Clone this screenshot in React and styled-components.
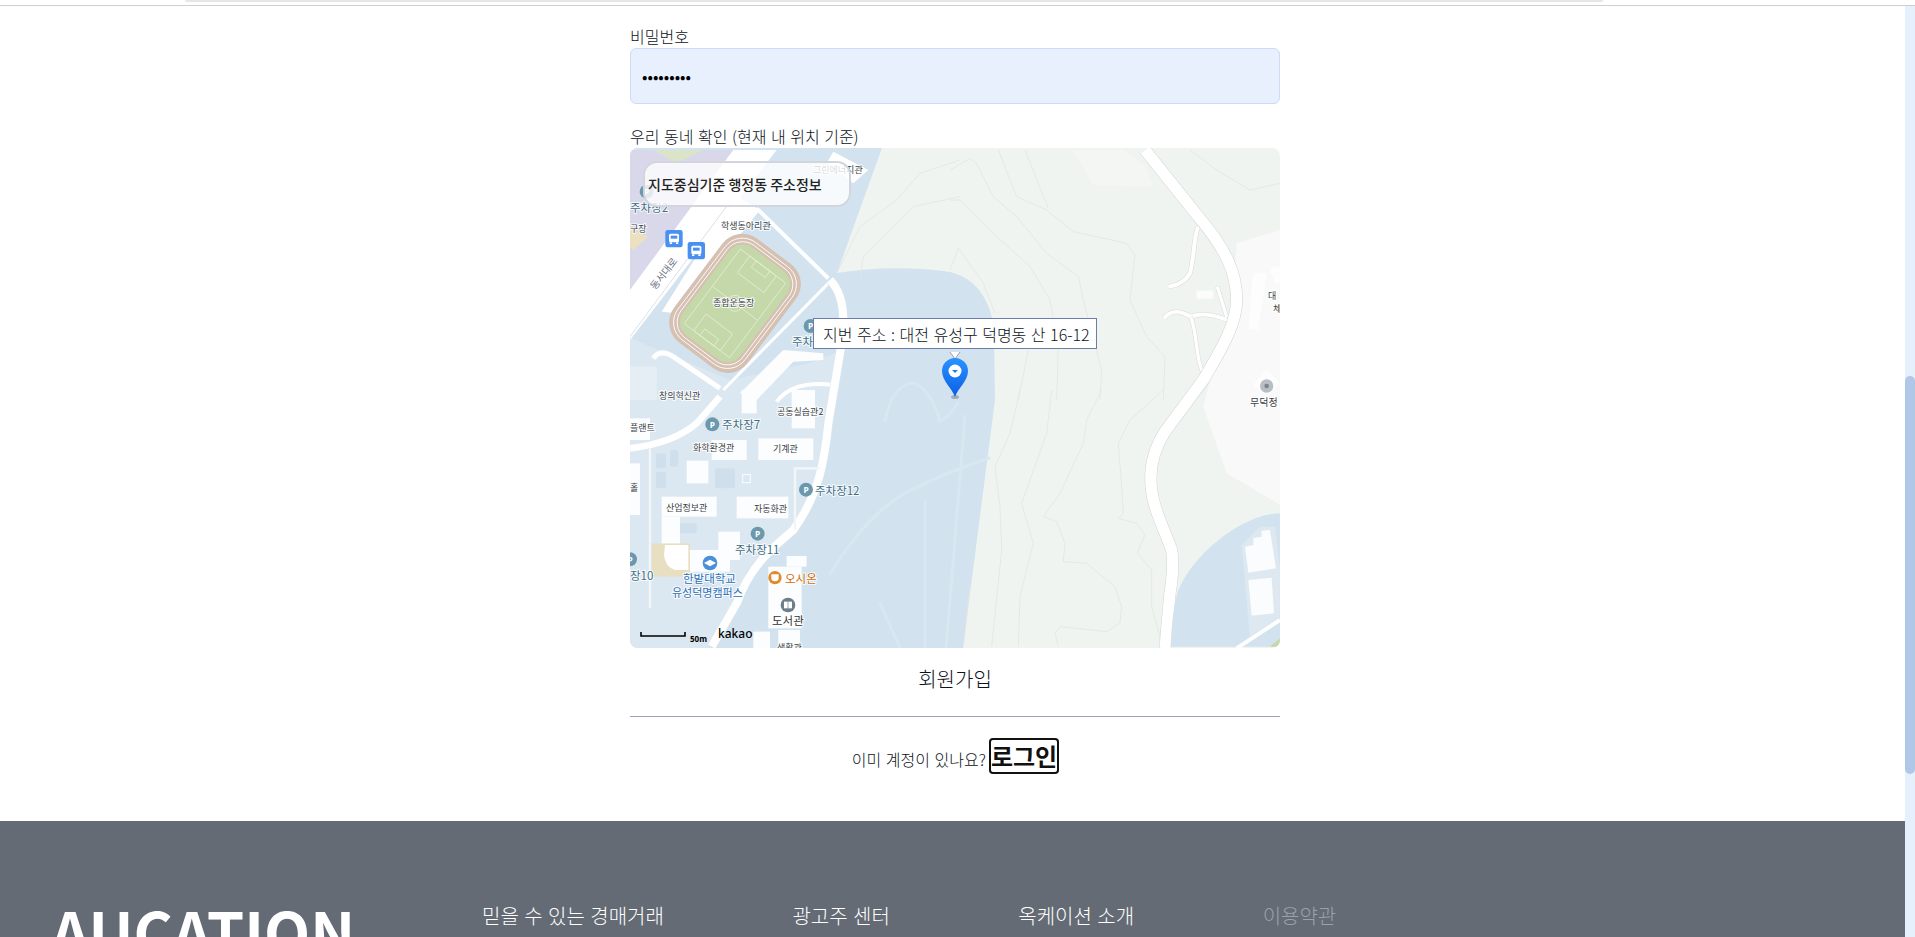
import React from "react";
import styled, { createGlobalStyle } from "styled-components";

const GlobalStyle = createGlobalStyle`
  html, body {
    margin: 0;
    padding: 0;
    background: #fff;
    overflow: hidden;
  }
  * {
    box-sizing: border-box;
  }
  body {
    font-family: "Noto Sans CJK KR", "Noto Sans", sans-serif;
    font-weight: 300;
    word-spacing: 1px;
    color: #0b1220;
  }
`;

const Screen = styled.div`
  display: flex;
  flex-direction: column;
  width: 1915px;
  height: 937px;
  overflow: hidden;
`;

const TopBar = styled.header`
  flex: none;
  height: 6px;
  border-bottom: 1px solid #cfcfcf;
`;

const TopStrip = styled.div`
  width: 1418px;
  height: 2px;
  margin-left: 185px;
  background: #e6e6e6;
  border-radius: 0 0 4px 4px;
`;

const Body = styled.div`
  flex: 1;
  min-height: 0;
  display: flex;
`;

const Main = styled.main`
  flex: 1;
  min-width: 0;
`;

const Track = styled.div`
  flex: none;
  width: 10px;
  padding-top: 370px;
  background: #e6effc;
`;

const Thumb = styled.div`
  height: 398px;
  border-radius: 5px;
  background: #b1c7e8;
`;

const Form = styled.form`
  width: 650px;
  margin-left: 630px;
  padding-top: 18px;
`;

const Label = styled.label`
  display: block;
  font-size: 16px;
  line-height: 24px;
`;

const PasswordInput = styled.input`
  display: block;
  width: 100%;
  height: 56px;
  margin-bottom: 20px;
  padding: 0 11px;
  border: 1px solid #cbdcfb;
  border-radius: 6px;
  background: #e8f0fe;
  color: #000;
  font-size: 16px;
  font-family: inherit;
  outline: none;
`;

const MapFrame = styled.div`
  position: relative;
  height: 500px;
  border-radius: 8px;
  overflow: hidden;
`;

const MapSvg = styled.svg`
  display: block;
  width: 650px;
  height: 500px;
  word-spacing: 0;
`;

const MapLabel = styled.text`
  font-family: "Noto Sans CJK KR", sans-serif;
  font-weight: 400;
  font-size: ${(p) => p.$size || 9}px;
  fill: ${(p) => p.$fill || "#3a3f47"};
  stroke: #fff;
  stroke-width: 2px;
  stroke-opacity: 0.85;
  paint-order: stroke;
  dominant-baseline: central;
`;

const IconLetter = styled.text`
  font-family: "Noto Sans", sans-serif;
  font-size: 25px;
  font-weight: 700;
  fill: #fff;
  text-anchor: middle;
  dominant-baseline: central;
`;

const ScaleText = styled.text`
  font-family: "Noto Sans", sans-serif;
  font-size: ${(p) => p.$size}px;
  font-weight: ${(p) => p.$weight};
  fill: #000;
  dominant-baseline: central;
`;

const AreaBox = styled.div`
  position: absolute;
  top: 13px;
  left: 13px;
  width: 208px;
  height: 46px;
  padding-left: 3px;
  display: flex;
  align-items: center;
  border: 2px solid #d2d6dc;
  border-radius: 14px;
  background: rgba(255, 255, 255, 0.8);
  color: #222;
  font-size: 14px;
  font-weight: 500;
  word-spacing: 0;
  white-space: nowrap;
`;

const AddressTip = styled.div`
  position: absolute;
  top: 170px;
  left: 183px;
  width: 284px;
  height: 31px;
  padding-left: 9px;
  display: flex;
  align-items: center;
  border: 1px solid #6b7da8;
  background: #fff;
  color: #0b1220;
  font-size: 16px;
  white-space: nowrap;
`;

const SubmitButton = styled.button`
  display: block;
  width: 100%;
  height: 50px;
  margin-top: 5px;
  padding: 0;
  border: none;
  background: none;
  color: #0b1220;
  font-family: inherit;
  font-weight: inherit;
  font-size: 20px;
`;

const Divider = styled.hr`
  height: 1px;
  margin: 13px 0 0;
  border: none;
  background: #9ea3b6;
`;

const LoginRow = styled.p`
  display: flex;
  justify-content: center;
  align-items: center;
  gap: 3px;
  height: 36px;
  margin: 21px 0 0;
  padding-left: 1px;
  font-size: 16px;
`;

const HintText = styled.span`
  padding-top: 6px;
`;

const LoginLink = styled.a`
  display: block;
  height: 36px;
  border: 2px solid #111;
  border-radius: 4px;
  color: #111;
  font-size: 24px;
  font-weight: 700;
  line-height: 31px;
`;

const Footer = styled.footer`
  display: flex;
  align-items: flex-start;
  height: 300px;
  margin-top: 47px;
  padding: 77px 0 0 51px;
  background: #646b75;
`;

const Logo = styled.div`
  width: 431px;
  margin-top: 2px;
  color: #fff;
  font-size: 60px;
  font-weight: 700;
  line-height: 60px;
`;

const FooterNav = styled.nav`
  display: flex;
  gap: 128.5px;
`;

const FooterLink = styled.a`
  color: ${(p) => (p.$muted ? "#9aa1aa" : "#fff")};
  font-size: 20px;
  line-height: 36px;
`;

const Road = ({ d, w, casing = "#cfd3d4" }) => (
  <>
    <path d={d} fill="none" stroke={casing} strokeWidth={w + 3} strokeLinejoin="round" />
    <path d={d} fill="none" stroke="#fff" strokeWidth={w} strokeLinejoin="round" />
  </>
);

const Contour = ({ points }) => (
  <polyline points={points} fill="none" stroke="#e2e6e2" strokeWidth="2.4" strokeLinejoin="round" />
);

const Parking = ({ x, y }) => (
  <g>
    <circle cx={x} cy={y} r="21" fill="#6c98ae" />
    <IconLetter x={x} y={y}>P</IconLetter>
  </g>
);

const Bus = ({ x, y }) => (
  <g>
    <rect x={x - 26} y={y - 26} width="52" height="52" rx="7" fill="#4a90f0" />
    <rect x={x - 15} y={y - 15} width="30" height="26" rx="5" fill="#fff" />
    <rect x={x - 10} y={y - 9} width="20" height="9" fill="#4a90f0" />
    <rect x={x - 13} y={y + 11} width="7" height="5" fill="#fff" />
    <rect x={x + 6} y={y + 11} width="7" height="5" fill="#fff" />
  </g>
);

const contoursTopLeft = [
  "650,400 720,260 830,180 900,100 1020,60",
  "720,420 730,350 880,200 1020,170",
];

const contoursTopRight = [
  "0,90 60,55 80,70 130,170 200,230 290,340 385,410 400,480 455,690 450,780",
  "0,180 30,180 130,280 240,380 300,480 325,620 320,780",
  "145,30 200,170 290,210 370,275 530,310 555,345 540,480 590,590 645,650 640,780",
  "225,30 295,205",
  "0,390 25,325 100,430 135,520",
  "235,630 205,780",
  "720,30 800,90 900,150 990,130",
];

const contoursBottomRight = [
  "210,0 180,130 135,230 150,350 155,480 125,770",
  "305,0 290,130 215,340 250,460 210,620 205,770",
  "455,0 410,90 400,160 330,310 280,380 320,395 345,460 340,515 410,520 495,590 515,650 510,700 470,725 330,710 315,730 325,770",
  "640,0 540,90 505,160 515,290 520,370 505,385 560,400 585,435 562,490 605,540 605,650 630,740 628,770",
  "60,590 40,770",
];

const campusBuildings = [
  [415, 145, 165, 65],
  [275, 150, 105, 60],
  [515, 0, 70, 115],
  [365, 0, 45, 70],
  [200, 212, 65, 68],
  [350, 320, 155, 65],
  [125, 320, 165, 60],
  [125, 380, 55, 80],
  [295, 425, 65, 85],
  [210, 480, 120, 65],
  [445, 530, 100, 185],
  [500, 498, 60, 32],
  [475, 720, 65, 60],
  [400, 725, 50, 50],
  [30, 85, 60, 65],
  [30, 220, 30, 130],
  [30, 345, 30, 30],
];

const campusLawns = [
  [108, 190, 30, 45],
  [150, 180, 25, 50],
  [108, 245, 30, 50],
  [285, 235, 60, 60],
  [150, 400, 80, 30],
  [215, 570, 70, 40],
];

const mapLabels = [
  { text: "그린에너지관", x: 183, y: 21, size: 9 },
  { text: "주차장2", x: 0, y: 59, size: 11.5, fill: "#3d6e84" },
  { text: "학생동아리관", x: 91, y: 77 },
  { text: "구장", x: 0, y: 80 },
  { text: "종합운동장", x: 83, y: 154 },
  { text: "주차장1", x: 162, y: 193, size: 11.5, fill: "#3d6e84" },
  { text: "창의혁신관", x: 29, y: 247 },
  { text: "공동실습관2", x: 147, y: 263 },
  { text: "주차장7", x: 92, y: 276, size: 11.5, fill: "#3d6e84" },
  { text: "플랜트", x: 0, y: 279 },
  { text: "화학환경관", x: 63, y: 299 },
  { text: "기계관", x: 143, y: 300 },
  { text: "홀", x: 0, y: 339 },
  { text: "주차장12", x: 185, y: 342, size: 11.5, fill: "#3d6e84" },
  { text: "산업정보관", x: 36, y: 359 },
  { text: "자동화관", x: 124, y: 360 },
  { text: "주차장11", x: 105, y: 401, size: 11.5, fill: "#3d6e84" },
  { text: "장10", x: 0, y: 427, size: 11.5, fill: "#3d6e84" },
  { text: "한밭대학교", x: 53, y: 430, size: 11.5, fill: "#2c6fb8" },
  { text: "오시온", x: 155, y: 430, size: 11.5, fill: "#cf6b06" },
  { text: "유성덕명캠퍼스", x: 42, y: 444, size: 11, fill: "#2c6fb8" },
  { text: "도서관", x: 142, y: 472, size: 11.5, fill: "#333" },
  { text: "생활관", x: 147, y: 499 },
  { text: "대", x: 638, y: 147 },
  { text: "체", x: 643, y: 160 },
  { text: "무덕정", x: 620, y: 253, size: 10 },
];

function CampusMap() {
  return (
    <MapSvg viewBox="0 0 650 500">
      <rect width="650" height="500" fill="#f0f4f1" />
      <path d="M0 0 L252 0 L207 125 C240 120 280 118 320 124 C345 130 360 150 364 180 L365 252 L333 500 L0 500Z" fill="#d2e3ef" />

      {/* campus tint stops at the main road, lake paths stay on the other side */}
      <path d="M0 242 L203 242 L190 342 L163 382 L117 422 L93 482 L80 500 L0 500Z" fill="#dce8f1" />
      <path d="M0 190 L100 232 L180 215 L205 205 L203 242 L0 242Z" fill="#dce8f1" />
      <g fill="none" stroke="#d9e7f1" strokeWidth="3" strokeLinecap="round">
        <path d="M255 273 Q262 237 283 235 Q300 240 310 273 Q318 270 328 255" />
        <path d="M200 426 C225 385 250 360 275 345 Q315 325 359 310" />
        <path d="M295 353 L295 500" />
        <path d="M335 268 L316 500" />
        <path d="M250 455 L270 500" />
      </g>

      {/* stadium side, traced in 3x crop coordinates */}
      <g transform="translate(-10,-8) scale(0.3333)">
        <polygon points="30,30 340,30 30,450" fill="#d8d8ea" />
        <polygon points="100,30 250,30 170,70" fill="#d9e4c8" />
        <polygon points="30,265 85,290 40,330 30,320" fill="#ebe0c0" />
        <polygon points="340,30 470,30 30,600 30,450" fill="#fff" />
        <line x1="345" y1="165" x2="30" y2="590" stroke="#dbe0e5" strokeWidth="3" />
        <polygon points="345,165 420,210 170,520 125,515" fill="#fff" />
        <polygon points="640,35 745,90 700,130 620,70" fill="#fff" />
        <polygon points="30,680 110,680 110,780 30,780" fill="#e6eef5" />
        <polygon points="360,760 490,630 610,640 610,660 520,665 410,780" fill="#fdfdfe" />
        <path d="M100 655 Q120 625 160 650 L300 745" fill="none" stroke="#fff" strokeWidth="15" />
        <path d="M470 785 Q520 720 640 735" fill="none" stroke="#fff" strokeWidth="12" />
        <path d="M410 205 L625 415" fill="none" stroke="#fff" strokeWidth="12" />
        <path d="M630 425 L310 750" fill="none" stroke="#fff" strokeWidth="9" />
        <Road d="M630 420 C680 470 675 560 660 640 L625 850 C615 950 600 1060 520 1170 C450 1230 390 1280 350 1390 L275 1520" w={24} casing="#dfe6ea" />

        <g transform="translate(345,490) rotate(37)">
          <rect x="-138" y="-195" width="276" height="390" rx="75" fill="#d5c0b1" />
          <rect x="-126" y="-183" width="252" height="366" rx="66" fill="none" stroke="#fff" strokeWidth="2.5" />
          <rect x="-116" y="-173" width="232" height="346" rx="58" fill="none" stroke="#fff" strokeWidth="2.5" />
          <rect x="-108" y="-165" width="216" height="330" rx="50" fill="#c4d8aa" />
          <g fill="none" stroke="#e3ecd3" strokeWidth="2.5">
            <rect x="-85" y="-140" width="170" height="280" />
            <line x1="-85" y1="0" x2="85" y2="0" />
            <circle r="24" />
            <rect x="-50" y="-140" width="100" height="62" />
            <rect x="-26" y="-140" width="52" height="24" />
            <rect x="-50" y="78" width="100" height="62" />
            <rect x="-26" y="116" width="52" height="24" />
          </g>
        </g>

        <Parking x={80} y={155} />
        <Parking x={572} y={558} />
        <Bus x={162} y={296} />
        <Bus x={229} y={332} />
        {contoursTopLeft.map((points) => (
          <Contour key={points} points={points} />
        ))}
      </g>

      <g transform="translate(-10,242) scale(0.3333)">
        {campusLawns.map(([x, y, width, height]) => (
          <rect key={`${x}-${y}`} x={x} y={y} width={width} height={height} rx="6" fill="#cfdfeb" />
        ))}
        <path d="M300 20 L230 100 Q160 160 30 175" fill="none" stroke="#fff" strokeWidth="20" />
        <path d="M90 175 L90 655" fill="none" stroke="#f3f6f9" strokeWidth="7" />
        <path d="M525 420 L525 235 L600 235" fill="none" stroke="#f3f6f9" strokeWidth="7" />
        <rect x="95" y="460" width="115" height="100" fill="#e8dfc3" />
        <path d="M135 465 H205 V540 H165 Q135 530 132 495Z" fill="#fff" />
        {campusBuildings.map(([x, y, width, height]) => (
          <rect key={`${x}-${y}`} x={x} y={y} width={width} height={height} fill="#fcfdfe" />
        ))}
        <rect x="368" y="254" width="23" height="24" fill="none" stroke="#fcfdfe" strokeWidth="3" />
        <Parking x={277} y={103} />
        <Parking x={558} y={299} />
        <Parking x={413} y={431} />
        <Parking x={30} y={508} />
        <circle cx="270" cy="519" r="22" fill="#4a90d9" />
        <path d="M252 519 L270 509 L288 519 L270 529Z" fill="#fff" />
        <circle cx="465" cy="563" r="20" fill="#e08a2c" />
        <path d="M454 553 H476 V564 Q476 574 465 574 Q454 574 454 564Z" fill="#fff" />
        <circle cx="504" cy="645" r="22" fill="#6e7e88" />
        <rect x="492" y="635" width="24" height="20" fill="#fff" />
        <rect x="503" y="635" width="2" height="20" fill="#6e7e88" />
      </g>

      {/* mountain side */}
      <g transform="translate(320,-8) scale(0.3333)">
        {contoursTopRight.map((points) => (
          <Contour key={points} points={points} />
        ))}
        <polygon points="370,30 520,30 585,80 610,140 430,135" fill="#f4f6f4" />
        <polygon points="990,270 860,310 850,500 800,640 760,800 830,1000 1000,1100 1000,270" fill="#f8f9f8" />
        <polygon points="910,400 950,400 925,570 895,565" fill="#fcfdfc" />
        <polygon points="960,385 995,378 995,430 975,430" fill="#fcfdfc" />
        <Road d="M745 260 C730 290 735 340 720 400 Q700 435 655 440" w={12} casing="#d6d9d8" />
        <Road d="M642 535 C665 505 695 515 722 530 C745 525 760 515 835 540" w={12} casing="#d6d9d8" />
        <Road d="M802 440 L830 530" w={10} casing="#d6d9d8" />
        <Road d="M722 530 C745 590 735 660 765 712" w={10} casing="#d6d9d8" />
        <rect x="740" y="452" width="50" height="24" fill="#fbfcfb" />
        <Road d="M585 30 L745 230 C830 330 860 400 860 480 C860 560 800 650 760 720 L645 875 C610 930 600 980 603 1030 C606 1100 640 1160 665 1230 C672 1270 668 1310 660 1360 L645 1525" w={34} />
        <polygon points="908,735 950,690 990,730 950,770" fill="#fcfdfc" />
        <circle cx="950" cy="738" r="20" fill="#b9bec4" />
        <circle cx="950" cy="738" r="7" fill="#7c848c" />
      </g>

      <g transform="translate(320,242) scale(0.3333)">
        {contoursBottomRight.map((points) => (
          <Contour key={points} points={points} />
        ))}
        <path d="M990 370 C880 370 730 490 685 600 C670 650 665 700 662 770 L990 770Z" fill="#d2e3ef" />
        <polygon points="875,465 930,410 975,410 990,540 990,680 900,740" fill="#dde8f1" />
        <polygon points="885,470 910,465 910,445 935,440 935,422 960,420 978,535 895,548" fill="#fbfcfd" />
        <polygon points="895,570 965,563 972,670 905,677" fill="#fbfcfd" />
        <polygon points="960,770 990,745 990,770" fill="#c5d9ab" />
        <path d="M860 775 L990 690" fill="none" stroke="#fff" strokeWidth="12" />
      </g>

      {mapLabels.map(({ text, x, y, size, fill }) => (
        <MapLabel key={text} x={x} y={y} $size={size} $fill={fill}>
          {text}
        </MapLabel>
      ))}
      <MapLabel x={33} y={125} $size={10} $fill="#6b7280" textAnchor="middle" transform="rotate(-52 33 125)">
        동서대로
      </MapLabel>

      <path d="M11 484 V488 H55 V484" fill="none" stroke="#000" strokeWidth="1.6" />
      <ScaleText x={60} y={490} $size={8} $weight={700}>50m</ScaleText>
      <ScaleText x={88} y={485} $size={12} $weight={500}>kakao</ScaleText>

      {/* marker */}
      <defs>
        <linearGradient id="pinFill" x1="0" y1="0" x2="0" y2="1">
          <stop offset="0" stopColor="#2a92ff" />
          <stop offset="1" stopColor="#0b5ee6" />
        </linearGradient>
      </defs>
      <ellipse cx="325" cy="249" rx="4" ry="2" fill="#8b97a3" opacity="0.7" />
      <path d="M320 204 L325 211 L330 204" fill="#fff" stroke="#9aa5b1" strokeWidth="1" />
      <path d="M325 249 C322 240 312 233 312 223 A13 13 0 1 1 338 223 C338 233 328 240 325 249Z" fill="url(#pinFill)" />
      <circle cx="325" cy="223" r="6.5" fill="#fff" />
      <path d="M322 222 H328 L325 225Z" fill="#1f7ff0" />
    </MapSvg>
  );
}

function App() {
  return (
    <Screen>
      <GlobalStyle />
      <TopBar>
        <TopStrip />
      </TopBar>
      <Body>
        <Main>
          <Form onSubmit={(e) => e.preventDefault()}>
            <Label htmlFor="password">비밀번호</Label>
            <PasswordInput id="password" type="password" value="123456789" readOnly />
            <Label>우리 동네 확인 (현재 내 위치 기준)</Label>
            <MapFrame>
              <CampusMap />
              <AreaBox>지도중심기준 행정동 주소정보</AreaBox>
              <AddressTip>지번 주소 : 대전 유성구 덕명동 산 16-12</AddressTip>
            </MapFrame>
            <SubmitButton type="submit">회원가입</SubmitButton>
            <Divider />
            <LoginRow>
              <HintText>이미 계정이 있나요?</HintText>
              <LoginLink>로그인</LoginLink>
            </LoginRow>
          </Form>
          <Footer>
            <Logo>AUCATION</Logo>
            <FooterNav>
              <FooterLink>믿을 수 있는 경매거래</FooterLink>
              <FooterLink>광고주 센터</FooterLink>
              <FooterLink>옥케이션 소개</FooterLink>
              <FooterLink $muted>이용약관</FooterLink>
            </FooterNav>
          </Footer>
        </Main>
        <Track>
          <Thumb />
        </Track>
      </Body>
    </Screen>
  );
}

export default App;
